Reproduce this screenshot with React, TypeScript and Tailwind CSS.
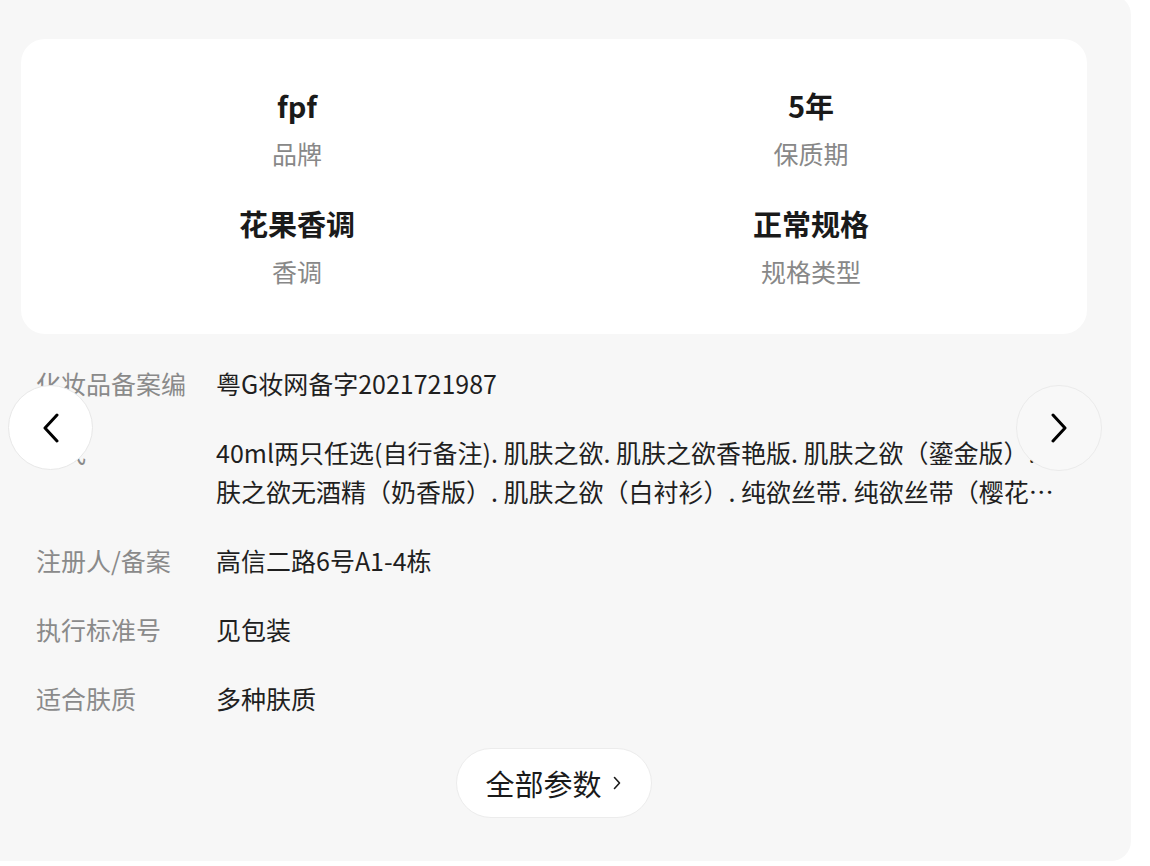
import React from 'react';

const font = { fontFamily: '"Noto Sans CJK SC", "Noto Sans", sans-serif' };

const highlights = [
  { value: 'fpf', label: '品牌' },
  { value: '5年', label: '保质期' },
  { value: '花果香调', label: '香调' },
  { value: '正常规格', label: '规格类型' },
];

const params = [
  { label: '化妆品备案编号', value: '粤G妆网备字2021721987' },
  {
    label: '款式',
    value:
      '40ml两只任选(自行备注). 肌肤之欲. 肌肤之欲香艳版. 肌肤之欲（鎏金版）. 肌肤之欲无酒精（奶香版）. 肌肤之欲（白衬衫）. 纯欲丝带. 纯欲丝带（樱花版）. 纯欲丝带（蜜桃版）',
  },
  { label: '注册人/备案', value: '高信二路6号A1-4栋' },
  { label: '执行标准号', value: '见包装' },
  { label: '适合肤质', value: '多种肤质' },
];

const Chevron = ({ dir }: { dir: 'left' | 'right' }) => (
  <svg width="18" height="30" viewBox="0 0 18 30" fill="none" stroke="#000" strokeWidth={3} strokeLinecap="round" strokeLinejoin="round">
    {dir === 'left' ? <path d="M15 2L3 15l12 13" /> : <path d="M3 2l12 13L3 28" />}
  </svg>
);

export default function App() {
  return (
    <div className="min-h-screen bg-white overflow-hidden" style={font}>
      <div className="relative -mt-[5px] w-[1131px] rounded-r-[20px] bg-[#f7f7f7] pt-[44px] pb-[43px] pl-[21px] pr-[44px]">
        {/* Highlights */}
        <div className="grid grid-cols-2 gap-y-[33px] rounded-[24px] bg-white px-[19px] pt-[46px] pb-[46px]">
          {highlights.map((h) => (
            <div key={h.label} className="flex flex-col items-center">
              <span className="text-[29px] font-bold leading-[40px] text-[#1a1a1a]">{h.value}</span>
              <span className="mt-[11px] text-[25px] leading-[34px] text-[#888888]">{h.label}</span>
            </div>
          ))}
        </div>

        {/* Params */}
        <div className="mt-[30px] flex flex-col gap-[30px] pl-[15px]">
          {params.map((p) => (
            <div key={p.label} className="flex text-[25px] leading-[39px]">
              <span className="w-[150px] shrink-0 overflow-hidden whitespace-nowrap text-[#8a8a8a]">{p.label}</span>
              <span className="ml-[30px] w-[853px] line-clamp-2 text-[#1f1f1f]">{p.value}</span>
            </div>
          ))}
        </div>

        <div className="mt-[30px] flex justify-center">
          <button className="flex h-[70px] items-center gap-[11px] rounded-full border border-[#ececec] bg-white pl-[28px] pr-[30px] text-[29px] text-[#1a1a1a]">
            <span className="leading-none">全部参数</span>
            <svg width="8" height="14" viewBox="0 0 8 14" fill="none" stroke="#1a1a1a" strokeWidth={1.6} strokeLinecap="round" strokeLinejoin="round">
              <path d="M1.5 1.5L6.5 7l-5 5.5" />
            </svg>
          </button>
        </div>

        {/* Carousel arrows */}
        <button className="absolute left-[8px] top-[390px] flex h-[85px] w-[85px] items-center justify-center rounded-full border border-[#e8e8e8] bg-white">
          <Chevron dir="left" />
        </button>
        <button className="absolute left-[1016px] top-[390px] flex h-[86px] w-[86px] items-center justify-center rounded-full border border-[#ebebeb] bg-[#f8f8f8]">
          <Chevron dir="right" />
        </button>
      </div>
    </div>
  );
}
